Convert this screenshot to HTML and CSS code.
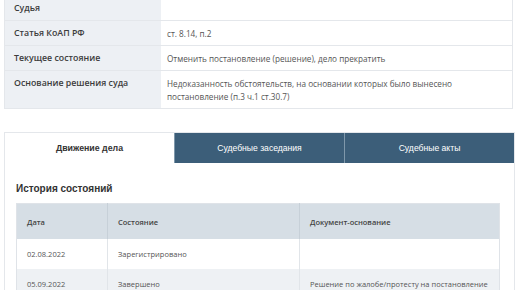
FILE: index.html
```html
<!DOCTYPE html>
<html lang="ru">
<head>
<meta charset="utf-8">
<link rel="stylesheet" href="styles.css">
</head>
<body>
<table class="info">
  <tr><th>Судья</th><td></td></tr>
  <tr><th>Статья КоАП РФ</th><td>ст. 8.14, п.2</td></tr>
  <tr><th>Текущее состояние</th><td>Отменить постановление (решение), дело прекратить</td></tr>
  <tr><th>Основание решения суда</th><td>Недоказанность обстоятельств, на основании которых было вынесено<br>постановление (п.3 ч.1 ст.30.7)</td></tr>
</table>

<section class="case">
  <div class="tabs">
    <div class="tab active">Движение дела</div>
    <div class="tab">Судебные заседания</div>
    <div class="tab">Судебные акты</div>
  </div>
  <div class="panel">
    <h2 class="panel-title">История состояний</h2>
    <table class="history">
      <colgroup><col class="c1"><col class="c2"><col class="c3"></colgroup>
      <thead>
        <tr><th>Дата</th><th>Состояние</th><th>Документ-основание</th></tr>
      </thead>
      <tbody>
        <tr><td>02.08.2022</td><td>Зарегистрировано</td><td></td></tr>
        <tr class="alt"><td>05.09.2022</td><td>Завершено</td><td>Решение по жалобе/протесту на постановление</td></tr>
      </tbody>
    </table>
  </div>
</section>
</body>
</html>
```

FILE: styles.css
```css
html, body {
  margin: 0;
  padding: 0;
  background: #ffffff;
  font-family: "Open Sans", "Liberation Sans", sans-serif;
}

.info {
  border-collapse: collapse;
  width: 509px;
  margin: -5px 0 0 4px;
  border: 1px solid #e4e7eb;
  border-top: 0;
  font-size: 8.2px;
}
.info tr { border-top: 1px solid #e4e7eb; }
.info th {
  width: 138px;
  background: #edf0f4;
  color: #3c3c3c;
  font-size: 8.8px;
  font-weight: 600;
  text-align: left;
  vertical-align: top;
  padding: 6px 9px 5px 9px;
  line-height: 13px;
}
.info td {
  color: #555;
  font-weight: 400;
  vertical-align: top;
  padding: 6px 6px 5px 6px;
  line-height: 13px;
}

.case {
  margin: 23px 1px 0 4px;
  border: 1px solid #e4e7eb;
  border-bottom: 0;
}
.tabs {
  display: grid;
  grid-template-columns: 169px 1fr 1fr;
}
.tab {
  height: 30px;
  display: flex;
  align-items: center;
  justify-content: center;
  font-family: "Liberation Sans", Arial, sans-serif;
  font-size: 8.6px;
  color: #ffffff;
  background: #3c5e79;
  border-left: 1px solid #7f98ab;
}
.tab.active {
  background: #ffffff;
  color: #333;
  font-size: 8.8px;
  font-weight: 700;
  border-left: 0;
}

.panel {
  padding: 0 14px 0 11px;
}
.panel-title {
  margin: 19px 0 7px;
  font-family: "Liberation Sans", Arial, sans-serif;
  font-size: 10px;
  line-height: 14px;
  font-weight: 700;
  color: #333;
}

.history {
  width: 484px;
  border-collapse: collapse;
  font-size: 7.5px;
  border: 1px solid #dfe3e8;
}
.history .c1 { width: 91px; }
.history .c2 { width: 192px; }
.history th {
  background: #d6dee5;
  color: #444;
  font-weight: 600;
  text-align: left;
  height: 35px;
  padding: 0 10px;
  border-right: 1px solid #c7d0d8;
}
.history td {
  color: #555;
  height: 30px;
  padding: 0 10px;
  white-space: nowrap;
  border-right: 1px solid #e1e5e9;
}
.history th:last-child, .history td:last-child { border-right: 0; }
.history .alt td { background: #eef1f4; }
```
